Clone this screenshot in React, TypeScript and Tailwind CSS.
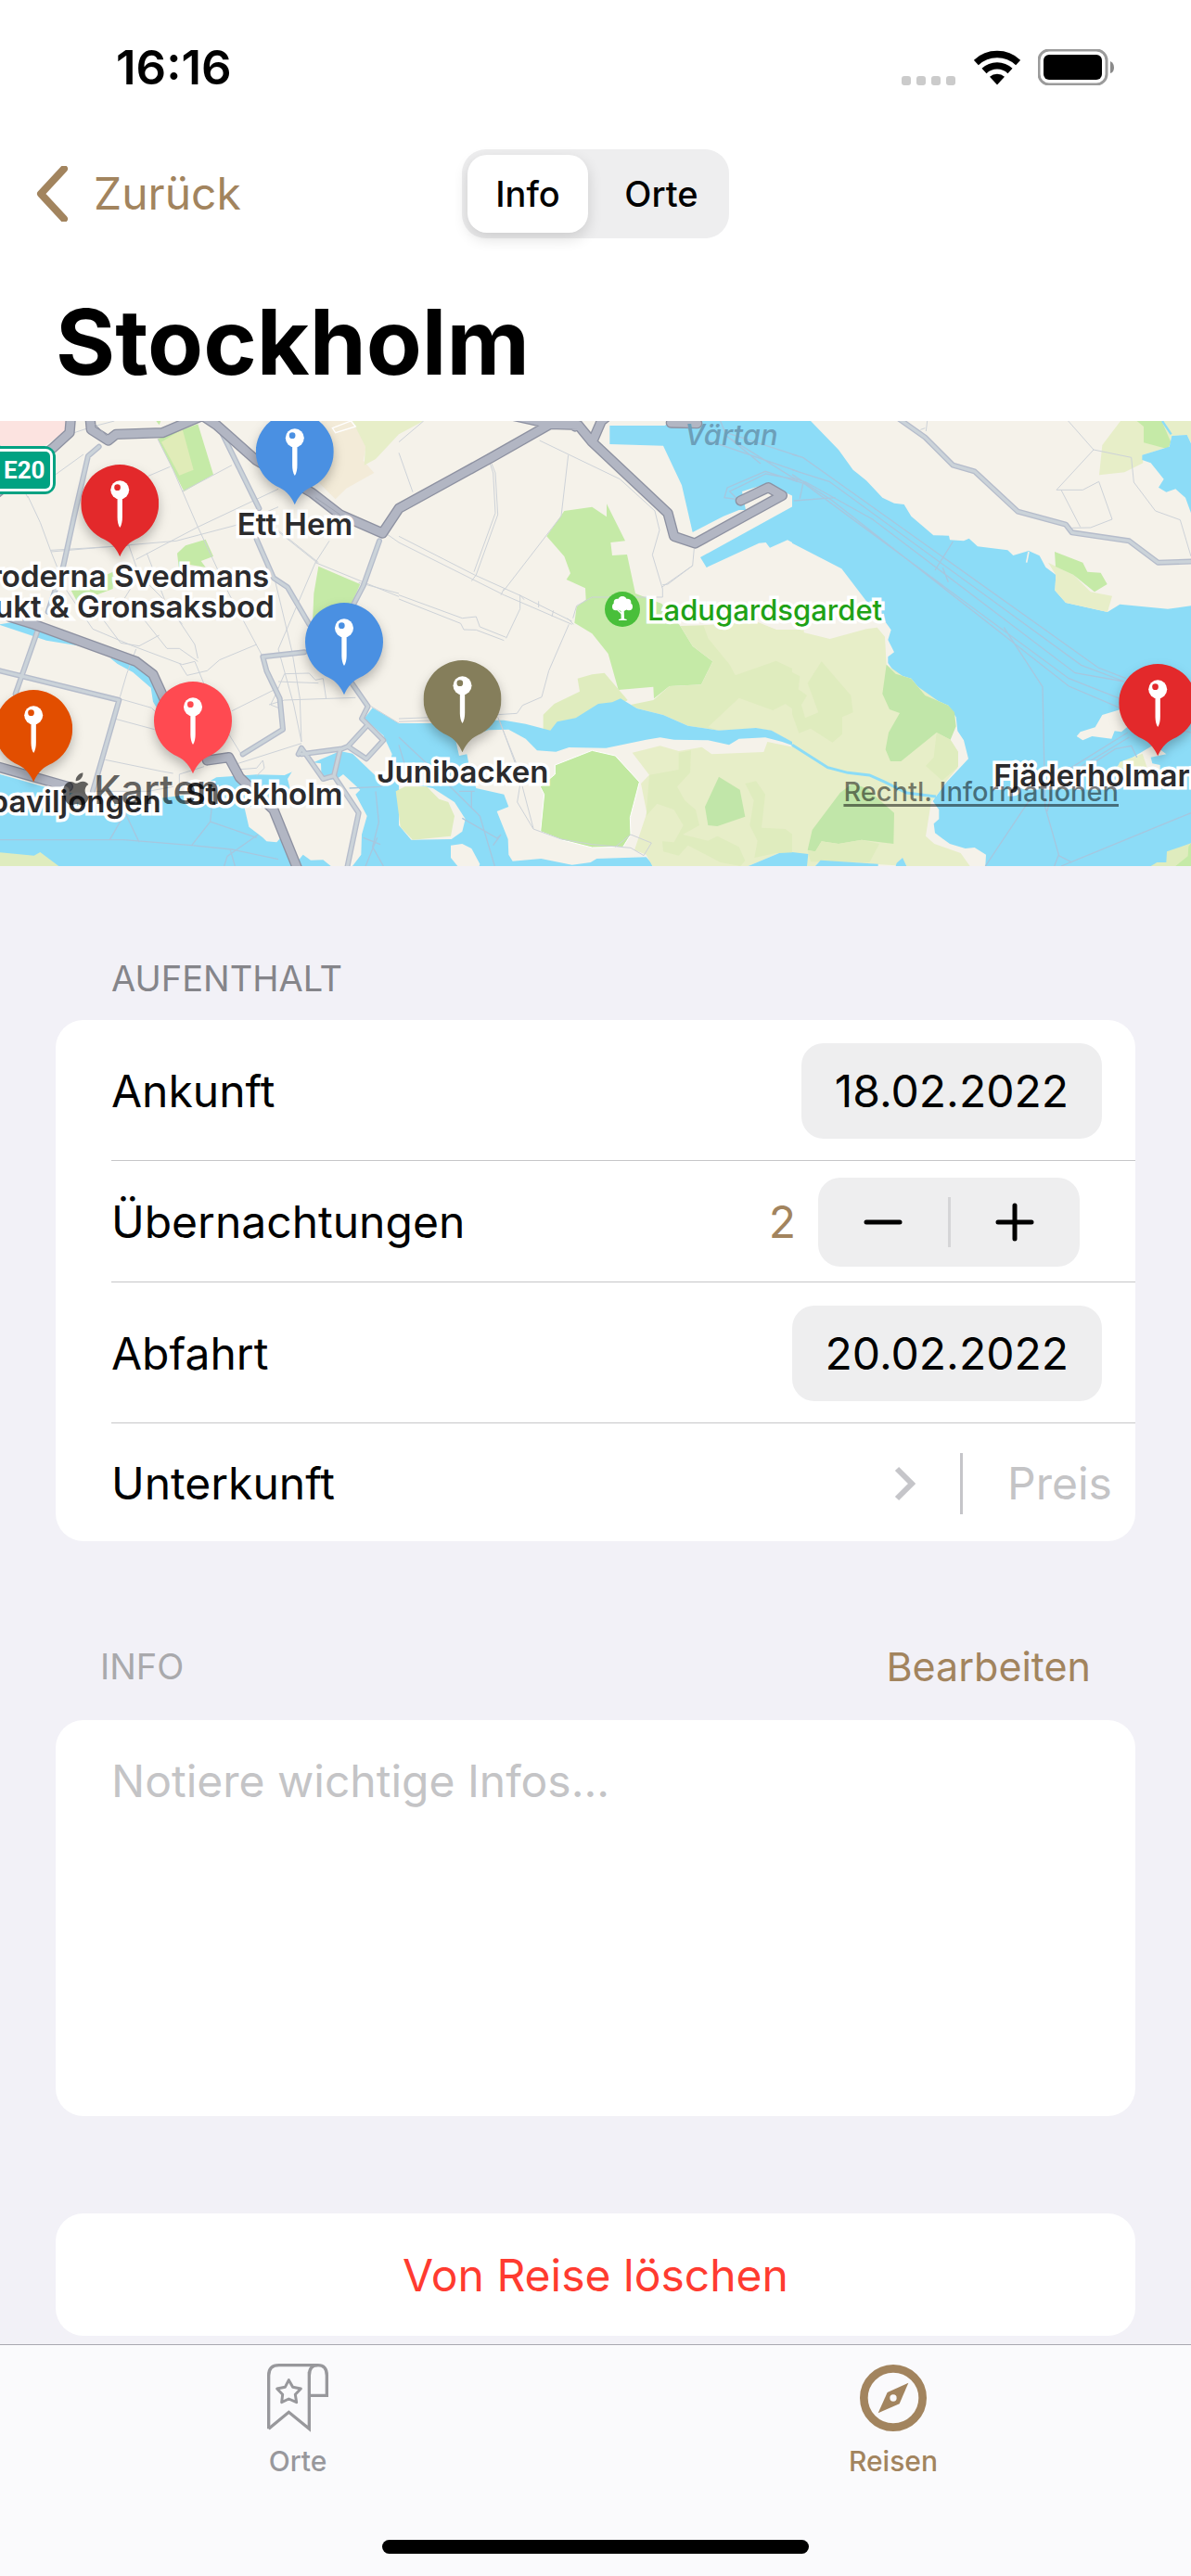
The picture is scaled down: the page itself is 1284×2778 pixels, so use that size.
import React, { useState } from 'react';

interface MapPin {
  x: number;
  y: number;
  color: string;
  label?: string[];
}

const PINS: MapPin[] = [
  { x: 318, y: 33, color: '#4a90e2', label: ['Ett Hem'] },
  { x: 129, y: 89, color: '#e3292b', label: ['Broderna Svedmans', 'Frukt & Gronsaksbod'] },
  { x: 371, y: 238, color: '#4a90e2' },
  { x: 499, y: 300, color: '#857e5b', label: ['Junibacken'] },
  { x: 1248, y: 304, color: '#e3292b', label: ['Fjäderholmarnas Krog'] },
  { x: 208, y: 323, color: '#ff4a51' },
  { x: 36, y: 332, color: '#e24e00', label: ['Mälarpaviljongen'] },
];

const HALO = 'whitespace-nowrap [paint-order:stroke_fill] [-webkit-text-stroke:7px_#ffffff]';

// the map is drawn in three tiles that share one coordinate system
const MID = 'translate(1290 0)';
const EAST = 'translate(2562 0)';

const WATER = '#8cdcf7';
const LAND = '#f5f2ea';
const PARK = '#c5eaa7';
const MEADOW = '#e7eec8';
const GRASS = '#dfecbe';
const FOREST = '#c1e6a9';

const Road = ({ d, size = 'local' }: { d: string; size?: 'highway' | 'local' }) => (
  <g fill="none" strokeLinecap="round" strokeLinejoin="round">
    <path d={d} stroke={size == 'highway' ? '#8d91a1' : '#b5bccb'} strokeWidth={size == 'highway' ? 34 : 18} />
    <path d={d} stroke={size == 'highway' ? '#b2b6c3' : '#cbd3d9'} strokeWidth={size == 'highway' ? 26 : 10} />
  </g>
);

const MapDrawing = () => (
  <svg className="w-full h-full" viewBox="0 42 3852 1440" preserveAspectRatio="xMidYMid slice" aria-hidden="true">
    <rect y="42" width="3852" height="1440" fill={LAND} />

    {/* west */}
    <path d="M0 42H214L208 78 140 125 0 128Z" fill="#fce3e0" />
    <path d="M505 42H520L515 55Z M510 100L640 52 690 215 595 270Z" fill={PARK} />
    <path d="M522 110L590 68 626 200 580 218Z" fill="#e0ecb8" />
    <path d="M573 470L600 445 665 425 690 480 650 495 665 515 600 505 580 530Z" fill={PARK} />
    <path d="M1030 512L1165 570 1130 650 1010 720 1015 600Z M230 590L365 530 365 585 250 628Z" fill={PARK} />
    <path d="M1040 42H1140L1185 120 1175 170 1210 210 1120 260 1085 295 1020 230Z" fill="#f3ebd8" />
    <path d="M1140 42H1370L1290 85 1215 165 1178 185 1182 125Z" fill={MEADOW} />
    <path d="M1075 65L1135 42 1150 60 1085 80Z" fill="none" stroke="#fff" strokeWidth="4" />
    <path d="M0 700L60 690 130 720 270 772 150 752 0 702Z" fill={WATER} />
    <path d="M355 808L440 830 490 865 520 935 508 972 495 950 488 905 430 855 380 828Z" fill={WATER} />
    <path
      d="M0 1185L130 1222 300 1262 520 1262 600 1252 700 1195 830 1186 920 1188 1010 1148 1100 1110 1140 1118 1215 1190 1255 1175 1268 1120 1240 1060 1178 1005 1205 970 1290 1020 1470 1020V1482H0Z"
      fill={WATER}
    />
    <path
      d="M790 1290L805 1355 850 1390 862 1402 895 1405 912 1385 960 1470 980 1445 1005 1463 1045 1462 1070 1482H1140L1168 1445 1170 1380 1187 1320 1150 1250 1165 1235 1110 1185 1090 1200 1040 1205 1038 1150 1000 1145 945 1175 930 1200 940 1240 880 1290Z"
      fill={LAND}
    />
    <path d="M0 1438L110 1448 130 1437 190 1482H0Z" fill={GRASS} />

    {/* middle */}
    <g transform={MID}>
      <path
        d="M535 333L625 320 672 352V310L732 430 685 435 690 477 738 474 765 600 850 633 910 705 950 770 1015 820 978 895 875 900 825 940 823 902 710 912 677 795 625 730 568 695 575 643 605 620 603 583 542 555 555 535 535 480 478 415Z"
        fill={PARK}
      />
      <path
        d="M910 705L985 703 1100 700 1160 695 1220 717 1290 717V1090L1205 1043 1155 1035 1035 1043 935 1028 855 993 770 972 750 960 823 945 875 900 978 895 1015 820 950 770Z"
        fill={GRASS}
      />
      <path d="M985 703L1160 692 1220 717 1310 717V860L1220 818 1088 865 1070 830 1000 745Z" fill={MEADOW} />
      <path d="M1000 1032L1100 938 1210 978 1250 957 1310 1000V1100L1205 1043 1155 1035 1035 1043Z" fill={MEADOW} />
      <path d="M578 875L625 862 665 857 740 945 717 960 490 1060 467 1040V992L503 957 585 917Z" fill={GRASS} />
      <path
        d="M0 1020L180 1020 290 1010 340 1010 410 1022 490 1043 512 1015 572 1003 645 957 690 952 717 940 770 972 855 993 935 1028 1035 1043 1155 1035 1205 1043 1290 1090V1098L1240 1080 1185 1066 1100 1070 1068 1090 1000 1075 890 1073 845 1066 800 1073 670 1100 550 1098 508 1112 447 1108 410 1070 355 1040 290 1042 240 1060 185 1080 195 1125 220 1120 228 1160 250 1230 340 1250 355 1290 317 1305 353 1395 355 1445 368 1466 460 1458 560 1478 620 1470 640 1458 800 1453 820 1475V1482H0Z"
        fill={WATER}
      />
      <path d="M0 1210L110 1230 180 1275 215 1330 205 1370 170 1395 40 1397 0 1350Z" fill={LAND} />
      <path d="M-10 1240L20 1225 90 1225 130 1265 160 1275 180 1320 168 1385 45 1397 5 1355Z" fill={GRASS} />
      <path d="M168 1415L205 1410 235 1425 262 1475 260 1482H190L168 1455Z" fill={LAND} />
      <path
        d="M505 1155L625 1108 700 1125 778 1210 748 1325 750 1380 725 1420 625 1422 530 1398 458 1370 470 1250 457 1225 505 1185Z"
        fill="#c1e8a0"
        stroke="#fff"
        strokeWidth="3"
      />
      <path
        d="M755 1115L845 1093 905 1110 980 1097 1012 1120 1180 1113 1192 1080 1290 1100V1440L1230 1440 1130 1482H820L800 1445 762 1430 802 1310 783 1215 810 1187Z"
        fill={MEADOW}
      />
      <path
        d="M810 1187L905 1170 905 1115 945 1108 942 1180 900 1225 925 1270 960 1300 972 1350 918 1380 1000 1400 1030 1385 1100 1420 1120 1465 1105 1482 1040 1470 935 1415 905 1448 855 1435 852 1402 890 1405 920 1350 890 1300 835 1280 800 1320Z"
        fill={GRASS}
      />
      <path d="M1120 1215L1155 1207 1185 1250 1173 1358 1250 1362 1300 1400V1440L1220 1440 1150 1455 1160 1400 1135 1350 1148 1270Z" fill={GRASS} />
      <path d="M1035 1193L1103 1235 1120 1322 1030 1353 1000 1350 990 1290Z" fill={FOREST} />
      <path d="M1130 1482L1230 1440 1290 1437V1482Z" fill={WATER} />
      <path
        d="M682 57L860 57 880 42H1290V445L1257 427 1200 452 1187 435 1165 437 995 516 975 483 1280 315 1275 285 1190 245 1110 270 1122 330 1100 330 1050 350 950 402 915 250 855 122 682 117Z"
        fill={WATER}
      />
    </g>

    {/* east */}
    <g transform={EAST}>
      <path
        d="M0 42H60L150 135 197 200 240 235 292 290 330 308 362 312 385 350 457 412 507 413 510 427 555 430 572 422 600 448 697 460 715 477 765 462 800 478 820 515 853 540 850 590 885 630 1020 660 1060 635 1215 650 1290 640V1482H625L627 1445 590 1422 560 1425 510 1410 462 1375 458 1345 475 1330 475 1300 455 1272 465 1257 500 1210 570 1135 555 1075 535 1045 530 1000 505 962 430 930 385 875 335 860 310 825 310 805 330 790 310 750 320 718 300 690 290 665 240 625 160 520 0 437Z"
        fill={WATER}
      />
      <path
        d="M0 717L122 747 240 715 275 710 300 740 305 830 525 985 512 1073 535 1110V1165L500 1205 465 1257 450 1272 432 1385 460 1410 545 1440 575 1482H370L355 1455 335 1480 90 1465 75 1482H0Z"
        fill={MEADOW}
      />
      <path d="M95 820L190 930 197 985 162 1000V1055L130 1082 60 1037 22 1052 0 990V855L25 868 20 910 48 930 30 960 42 1003 85 985 50 890Z" fill={GRASS} />
      <path
        d="M305 830L335 860 385 875 430 930 505 962 525 985 530 1030 512 1073 467 1050 352 1143 318 1143 302 1105 312 1050 348 987 315 975 292 925Z"
        fill={FOREST}
      />
      <path d="M467 1050L512 1073 537 1112V1160L485 1205 432 1158 458 1130Z" fill={GRASS} />
      <path d="M195 1215L240 1230 330 1310 328 1410 225 1397 150 1410 95 1402 75 1435 50 1430 65 1365 155 1245Z" fill={FOREST} />
      <path d="M50 1432L75 1435 95 1402 150 1410 225 1397 282 1410 250 1470 60 1468Z" fill={GRASS} />
      <path d="M0 1437L52 1443 48 1482H0Z M75 1482L92 1463 278 1475V1482Z M335 1482L338 1472 357 1455 370 1482Z" fill={WATER} />
      <path d="M0 1090L115 1163 180 1180 250 1188 300 1210 370 1245 465 1257" fill="none" stroke={WATER} strokeWidth="9" />
      <path d="M1003 120L1062 42H1290V112L1277 87 1228 90 1220 125 1132 152 1135 178 1075 208 993 217Z" fill={MEADOW} />
      <path d="M1115 42H1195L1225 110 1215 133 1137 112V60Z" fill={PARK} />
      <path d="M1197 42L1226 85" stroke={WATER} strokeWidth="7" />
      <path d="M1290 340L1272 290 1240 262 1210 272 1185 257 1202 230 1160 178 1132 168V152L1220 125 1228 90 1277 87 1290 115Z" fill={WATER} />
      <path d="M828 500L910 540 965 595 1035 608 1020 660 885 630 850 590 853 540Z" fill={MEADOW} />
      <path d="M849 465L940 500 955 530 998 533 1019 570 978 595 910 540 852 513Z" fill={PARK} />
      <path d="M758 500L765 465" stroke={LAND} strokeWidth="5" />
      <path d="M920 1062L932 1048 980 1033 1003 993 1080 970 1110 1010 1065 1048 1043 1045 1033 1070 970 1062 940 1075Z" fill={LAND} />
      <path d="M1050 1160L1110 1125 1170 1090 1210 1120 1160 1130 1165 1150 1190 1155V1180Z" fill={LAND} />
      <path d="M1050 1165L1060 1145 1133 1118 1150 1170Z" fill={MEADOW} />
      <path d="M1160 1482L1180 1470 1210 1470 1212 1435 1290 1408V1482Z" fill={GRASS} />
      <path d="M1240 1482L1280 1450 1282 1418 1290 1408V1482Z" fill={PARK} />
    </g>

    {/* ferry lines */}
    <g fill="none" stroke="#a6c7df" strokeWidth="4">
      <path d="M0 1397H400L620 1415 750 1428 900 1460M620 1415L680 1338 830 1390M680 1338L685 1290M355 1397L405 1310 450 1405M835 1380L735 1450 725 1482M745 1430L760 1482M1130 1230L1230 1225 1290 1190M1215 1240L1225 1340 1205 1420 1240 1482M1175 1390L1230 1412M1175 1500L1220 1390" />
      <path transform={MID} d="M0 1065L90 1150 262 1320 310 1482M205 1327L318 1392 330 1380 305 1415M195 1240H245M235 1240V1292M0 1090L18 1150M1040 42L1060 90 1170 180M1000 105L1290 205M1060 80L1290 155M1290 238L1185 205 1062 258 1053 290 1105 297M1290 232L1187 213 1070 270 1110 310M1060 92L1290 235" />
      <path
        transform={EAST}
        d="M0 150L35 160 990 840 1080 875M0 200L120 238 935 832 1075 885M0 225L45 240 260 360 915 857 1075 885M0 232L40 245 895 875 1060 940M0 215L130 300 895 900 1060 970M5 300L140 290M35 245L25 293M520 432L462 525M487 517L505 563M685 710L810 902 818 1290 862 1445 848 1482M862 1448L905 1470M1085 1050L900 1165M1090 1065L910 1175M980 1145L1045 1103 1097 1093 1115 1130M770 1265L625 1482M835 1260L825 1305M870 1482L1290 1310M1270 1045L1290 1050"
      />
    </g>

    {/* side streets */}
    <g fill="none" stroke="#cdd2d8" strokeWidth="3">
      <path d="M90 285L130 370 165 465 215 590 300 715 430 770 590 830 630 820 700 990 780 1120M0 120L90 290 M165 465L570 430 760 380 900 320M165 460L420 445M180 215L270 150M510 100L560 200 640 385 740 600 850 805M480 220L550 190M590 270L750 185M440 490L640 385 900 262M415 440L450 540 530 620 580 690 630 765 640 810M475 470L540 640 590 700M300 640L390 760 450 770 515 735M450 540L400 620 470 690 540 778 580 778 640 820M440 780L410 860 388 935M580 825L605 865 670 850 710 815 830 765M1030 500L830 340M1020 500L900 780 950 960 975 1080M1020 500L1290 610M1065 430L1020 500M1160 565L1290 600M900 400L1025 500M890 560L945 790 970 940 975 1080M870 960L920 945 1150 937M920 860L1000 858 1020 880 1045 875 1055 942M920 860L890 930 875 960 900 970M900 885L1030 890M750 980L900 905M370 1005L500 1040M385 940L490 970 520 1000M340 1138L520 1175 560 1182M310 1240L480 1240 560 1225M580 1245V1185L660 1160M770 1150L975 1085M760 1170L830 1165 850 1140 855 1165 830 1190M1200 965L1290 1020M1240 400L1290 435M240 80L300 60 370 42" />
      <path transform={MID} d="M0 110L80 42M0 145L45 272M300 180L312 210 320 345 250 540 235 560M290 165L305 210 312 340 243 530M455 105L715 230 828 333 843 395 820 475 853 585V612H625L575 640 563 680M548 152L525 350 340 590M0 415L245 540 400 610 560 690M0 435L240 555 340 605 560 700M0 605L205 680 250 675 262 708 347 742M0 618L200 697 210 717 250 718 340 752M347 745L392 650V605L405 620M340 585L330 605M452 625V645M500 655L495 675M545 680L565 700M550 700L485 850 462 935 400 962 382 988 320 992M0 1005L130 1000M0 1015L130 1010M320 1000L380 1150 435 1360M325 1010L395 1200 383 1275 435 1362 525 1395 625 1412 750 1423 792 1448 817 1407 750 1380 700 1420M955 455L950 510 870 570 853 572M950 510L850 580" />
      <path transform={EAST} d="M437 42L433 75M415 70L430 65M893 42L975 135 1097 160 1105 240 1175 333 1255 362 1290 480M975 135L855 265 940 265 992 238 1035 360 965 387 905 388M870 265L932 385" />
    </g>

    <Road d="M320 125L285 155 240 350 205 510 155 660M120 725L50 925M720 85L838 325M830 425L885 550 930 580 1000 700M985 790L850 805 862 850 905 940 915 1040 785 1120M1110 850L1190 965 1170 1005 1240 1075 1185 1135 1125 1095 1185 1030M0 850L385 945 300 1240M1227 430L1175 575 1115 690M965 1120L975 1100 1045 1200 1080 1190 1100 1105 1125 1095M975 1120L1100 1103M1080 1190L1160 1310 1120 1500" />
    <g transform={EAST}>
      <Road d="M345 35L430 95 520 185 590 205 730 335 885 377 905 403 1090 430 1183 500 1310 496" />
    </g>
    <Road size="highway" d="M230 20L225 80 170 130 -10 275" />
    <Road size="highway" d="M290 20L295 70 350 105 375 85 525 80 655 25 700 55 830 170 1010 275 1100 345 1237 405 1290 325 1590 160 1780 52 1870 55 1915 110 2160 340 2180 415 2248 438 2530 283 2485 257 2395 300M1780 52L1660 25M1920 100L1945 42 1960 30M1860 60L1855 30" />
    <Road size="highway" d="M2170 48L2255 50" />
    <Road size="highway" d="M30 675L110 700 440 820 495 862 535 950M670 1140L740 1130 775 1195 885 1300 970 1510M-10 1160L220 1225" />
    <path d="M1020 290L1100 345M305 50L345 90" fill="none" stroke="#9fa4b2" strokeWidth="3" />
  </svg>
);

const PinIcon = ({ color }: { color: string }) => (
  <svg className="w-[84px] h-[100px] drop-shadow-[0_6px_6px_rgba(0,0,0,0.25)]" viewBox="0 0 252 300" aria-hidden="true">
    <path d="M126 298C116 274 102 255 76 242A126 126 0 1 1 176 242C150 255 136 274 126 298Z" fill={color} />
    <circle cx="126" cy="82" r="30" fill="#fff" />
    <circle cx="118" cy="74" r="10" fill={color} />
    <path d="M118 106H134V170Q134 192 126 204Q118 192 118 170Z" fill="#fff" />
  </svg>
);

const TripMap = () => (
  <div className="relative w-full h-[480px] overflow-hidden text-[#2b2b2d] font-semibold text-[33px] leading-[33px]">
    <MapDrawing />

    <div className="absolute left-0 top-[27px] w-[60px] h-[52px] rounded-r-xl bg-[#00a282] py-[3px] pr-[3px]">
      <div className="h-full border-y-[3px] border-r-[3px] border-white rounded-r-lg flex items-center pl-1 text-white text-[26px] font-bold font-[Roboto,sans-serif]">
        E20
      </div>
    </div>

    <div className="absolute left-[738px] top-0 italic font-medium text-[31px] leading-[30px] text-[#6c9fb9]">Värtan</div>

    <div className="absolute left-[652px] top-[184px] flex items-center gap-2 font-medium text-[31px] text-[#1fa216]">
      <svg className="w-[38px] h-[38px]" viewBox="0 0 114 114" aria-hidden="true">
        <circle cx="57" cy="57" r="57" fill="#49bf3a" />
        <g fill="#fff">
          <circle cx="57" cy="30" r="15" />
          <circle cx="41" cy="35" r="12" />
          <circle cx="73" cy="35" r="12" />
          <circle cx="36" cy="49" r="12" />
          <circle cx="78" cy="49" r="12" />
          <circle cx="57" cy="46" r="18" />
          <path d="M52 55H62L63 88 71 90V93H45V90L53 88Z" />
        </g>
        <path d="M40 58L55 72" stroke="#fff" strokeWidth="4" />
      </svg>
      <span className={HALO}>Ladugardsgardet</span>
    </div>

    {PINS.map((pin, index) => (
      <div
        key={index}
        className="absolute flex flex-col items-center gap-1 -translate-x-1/2"
        style={{ left: `${(pin.x / 1284) * 100}%`, top: pin.y - 42 }}
      >
        <PinIcon color={pin.color} />
        {pin.label ? (
          <div className="text-center">
            {pin.label.map(line => (
              <div key={line} className={HALO}>
                {line}
              </div>
            ))}
          </div>
        ) : (
          <></>
        )}
      </div>
    ))}
    <div className={`absolute left-[200px] top-[386px] ${HALO}`}>Stockholm</div>

    <div className="absolute left-[68px] top-[372px] flex items-center gap-[5px] text-black/60 font-medium text-[43px] leading-[50px]">
      <svg className="w-[28px] h-[36px]" viewBox="0 0 84 106" fill="currentColor" aria-hidden="true">
        <path d="M64 0C66 14 54 27 41 27C40 14 51 2 64 0Z" />
        <path d="M42 34C49 34 54 28 64 28C72 28 79 32 82 38C66 47 68 71 84 78C80 92 70 105 62 105C55 105 52 101 44 101C36 101 32 105 26 105C13 105 0 82 0 62C0 42 12 29 25 29C32 29 37 34 42 34Z" />
      </svg>
      Karten
    </div>
    <a
      href="#"
      className="absolute right-[78px] bottom-[64px] text-[29px] leading-[32px] font-medium text-black/50 underline decoration-[3px] underline-offset-[3px] [text-decoration-skip-ink:none]"
    >
      Rechtl. Informationen
    </a>
  </div>
);

const StatusBar = () => (
  <div className="h-36 pl-[125px] pr-[82px] flex items-center justify-between">
    <div className="text-[51px] font-semibold leading-none">16:16</div>
    <div className="flex items-end">
      <div className="flex gap-[6px] mr-[20px]">
        <div className="w-[10px] h-[10px] rounded-[3px] bg-[#cbcbcb]"></div>
        <div className="w-[10px] h-[10px] rounded-[3px] bg-[#cbcbcb]"></div>
        <div className="w-[10px] h-[10px] rounded-[3px] bg-[#cbcbcb]"></div>
        <div className="w-[10px] h-[10px] rounded-[3px] bg-[#cbcbcb]"></div>
      </div>
      <svg className="w-[50px] h-[38px] mr-[19px]" viewBox="0 0 150 113" aria-hidden="true">
        <g fill="none" stroke="#000" strokeWidth="22">
          <path d="M7 40A99 99 0 0 1 143 40" />
          <path d="M33 67A61 61 0 0 1 117 67" />
        </g>
        <path d="M51 86A36 36 0 0 1 99 86L75 112Z" />
      </svg>
      <svg className="w-[83px] h-[39px]" viewBox="0 0 83 39" aria-hidden="true">
        <rect x="1" y="1" width="73" height="37" rx="11" fill="none" stroke="#9b9b9b" strokeWidth="3" />
        <rect x="6" y="6" width="63" height="27" rx="6" />
        <path d="M78 13Q82 15 82 20T78 26Z" fill="#8a8a8a" />
      </svg>
    </div>
  </div>
);

const DateField = ({ id, value, onChange }: { id: string; value: string; onChange: (value: string) => void }) => (
  <input
    id={id}
    type="text"
    value={value}
    onChange={e => onChange(e.target.value)}
    className="field-sizing-content h-[103px] px-9 rounded-3xl bg-[#eeeeef] outline-none"
  />
);

const App = () => {
  const [view, setView] = useState('Info');
  const [arrival, setArrival] = useState('18.02.2022');
  const [departure, setDeparture] = useState('20.02.2022');
  const [nights, setNights] = useState(2);
  const [price, setPrice] = useState('');
  const [notes, setNotes] = useState('');

  return (
    <div className="min-h-screen flex flex-col bg-[#f2f1f7] text-black font-[Inter,'Liberation_Sans',sans-serif] text-[48px] leading-[60px]">
      <header className="bg-white">
        <StatusBar />
        <div className="h-32 px-9 pt-[2px] flex items-center">
          <div className="flex-1">
            <button className="flex items-center gap-6 text-[#a2845e]">
              <svg className="w-[41px] h-[60px]" viewBox="0 0 41 60" fill="none" aria-hidden="true">
                <path d="M33 3L8 30L33 57" stroke="currentColor" strokeWidth="8" strokeLinecap="round" strokeLinejoin="round" />
              </svg>
              Zurück
            </button>
          </div>
          <div className="w-[288px] h-24 p-[6px] flex gap-3 rounded-[26px] bg-[#eeeeef] text-[38px] leading-[48px] font-medium">
            {['Info', 'Orte'].map(name => (
              <button
                key={name}
                onClick={() => setView(name)}
                className={
                  view == name
                    ? 'w-[130px] rounded-[21px] bg-white shadow-[0_6px_16px_rgba(0,0,0,0.14)]'
                    : 'flex-1 rounded-[21px]'
                }
              >
                {name}
              </button>
            ))}
          </div>
          <div className="flex-1"></div>
        </div>
        <h1 className="h-[182px] px-[60px] pt-3 flex items-center text-[98px] font-bold">Stockholm</h1>
      </header>

      <TripMap />

      <main className="flex-1 px-[60px] pb-[9px]">
        <h2 className="mt-[97px] mb-[21px] px-[60px] text-[38px] leading-[48px] text-[#85858a]">AUFENTHALT</h2>
        <div className="rounded-[30px] bg-white pl-[60px] overflow-hidden">
          <div className="h-[152px] pt-[2px] pr-9 flex items-center justify-between border-b border-[#c6c6c8]">
            <label htmlFor="arrival">Ankunft</label>
            <DateField id="arrival" value={arrival} onChange={setArrival} />
          </div>
          <div className="h-[131px] pt-[2px] pr-[60px] flex items-center border-b border-[#c6c6c8]">
            <span className="flex-1">Übernachtungen</span>
            <output className="mr-6 text-[#a2845e]">{nights}</output>
            <div className="w-[282px] h-24 flex items-center rounded-3xl bg-[#eeeeef]">
              <button
                aria-label="Weniger"
                onClick={() => setNights(prev => Math.max(prev - 1, 1))}
                className="flex-1 h-full flex items-center justify-center"
              >
                <svg className="w-[42px] h-[42px]" viewBox="0 0 42 42" stroke="#000" strokeWidth="5" strokeLinecap="round">
                  <path d="M3 21H39" />
                </svg>
              </button>
              <div className="w-[3px] h-[54px] bg-[#d5d5d7]"></div>
              <button
                aria-label="Mehr"
                onClick={() => setNights(prev => prev + 1)}
                className="flex-1 h-full flex items-center justify-center"
              >
                <svg className="w-[42px] h-[42px]" viewBox="0 0 42 42" stroke="#000" strokeWidth="5" strokeLinecap="round">
                  <path d="M3 21H39M21 3V39" />
                </svg>
              </button>
            </div>
          </div>
          <div className="h-[152px] pt-[2px] pr-9 flex items-center justify-between border-b border-[#c6c6c8]">
            <label htmlFor="departure">Abfahrt</label>
            <DateField id="departure" value={departure} onChange={setDeparture} />
          </div>
          <div className="h-[127px] pt-[2px] pr-6 flex items-center">
            <button className="flex-1 flex items-center justify-between">
              Unterkunft
              <svg className="w-6 h-[38px]" viewBox="0 0 24 38" fill="none" aria-hidden="true">
                <path d="M4 3L20 19L4 35" stroke="#c5c5c9" strokeWidth="6" />
              </svg>
            </button>
            <div className="w-[3px] h-[66px] ml-12 mr-12 bg-[#c5c5c9]"></div>
            <input
              type="text"
              aria-label="Preis"
              placeholder="Preis"
              value={price}
              onChange={e => setPrice(e.target.value)}
              className="w-[114px] outline-none placeholder:text-[#c4c4c6]"
            />
          </div>
        </div>

        <div className="mt-[105px] mb-7 px-12 flex items-center justify-between">
          <label htmlFor="notes" className="text-[38px] text-[#a9a9ac]">
            INFO
          </label>
          <button className="text-[43px] text-[#a2845e]">Bearbeiten</button>
        </div>
        <textarea
          id="notes"
          placeholder="Notiere wichtige Infos..."
          value={notes}
          onChange={e => setNotes(e.target.value)}
          className="block w-full h-[427px] px-[60px] py-9 rounded-[30px] bg-white resize-none outline-none placeholder:text-[#c4c4c6]"
        />

        <button className="mt-[105px] w-full h-[132px] pt-[2px] rounded-[30px] bg-white text-[#ff3b30]">Von Reise löschen</button>
      </main>

      <nav className="h-[250px] flex flex-col justify-between bg-[#fafafc] border-t border-[#a9a8b0]">
        <div className="pt-5 grid grid-cols-2 text-[30px] leading-[40px] font-medium">
          <button className="flex flex-col items-center gap-[11px] text-[#98989c]">
            <svg className="w-[66px] h-[74px]" viewBox="144 84 198 222" fill="none" stroke="currentColor" strokeWidth="10" aria-hidden="true">
              <path d="M149 295V122Q149 89 182 89H308Q337 89 337 122V187H284" />
              <path d="M280 110V295L214 241L149 295M280 122Q280 89 308 89" />
              <path
                d="M214 137L227 160 253 165 235 184 239 209 214 198 191 209 194 184 176 165 202 160Z"
                strokeWidth="9"
                strokeLinejoin="round"
              />
            </svg>
            Orte
          </button>
          <button className="flex flex-col items-center gap-[11px] text-[#a2845e]">
            <svg className="w-[72px] h-[74px]" viewBox="138 87 216 222" aria-hidden="true">
              <circle cx="246" cy="198" r="95" fill="none" stroke="currentColor" strokeWidth="26" />
              <path d="M295 149L266 217L197 247L227 180Z" fill="currentColor" />
              <circle cx="246" cy="198" r="11" fill="#fafafc" />
            </svg>
            Reisen
          </button>
        </div>
        <div className="mx-auto mb-6 w-[460px] h-[15px] rounded-full bg-black"></div>
      </nav>
    </div>
  );
};

export default App;
